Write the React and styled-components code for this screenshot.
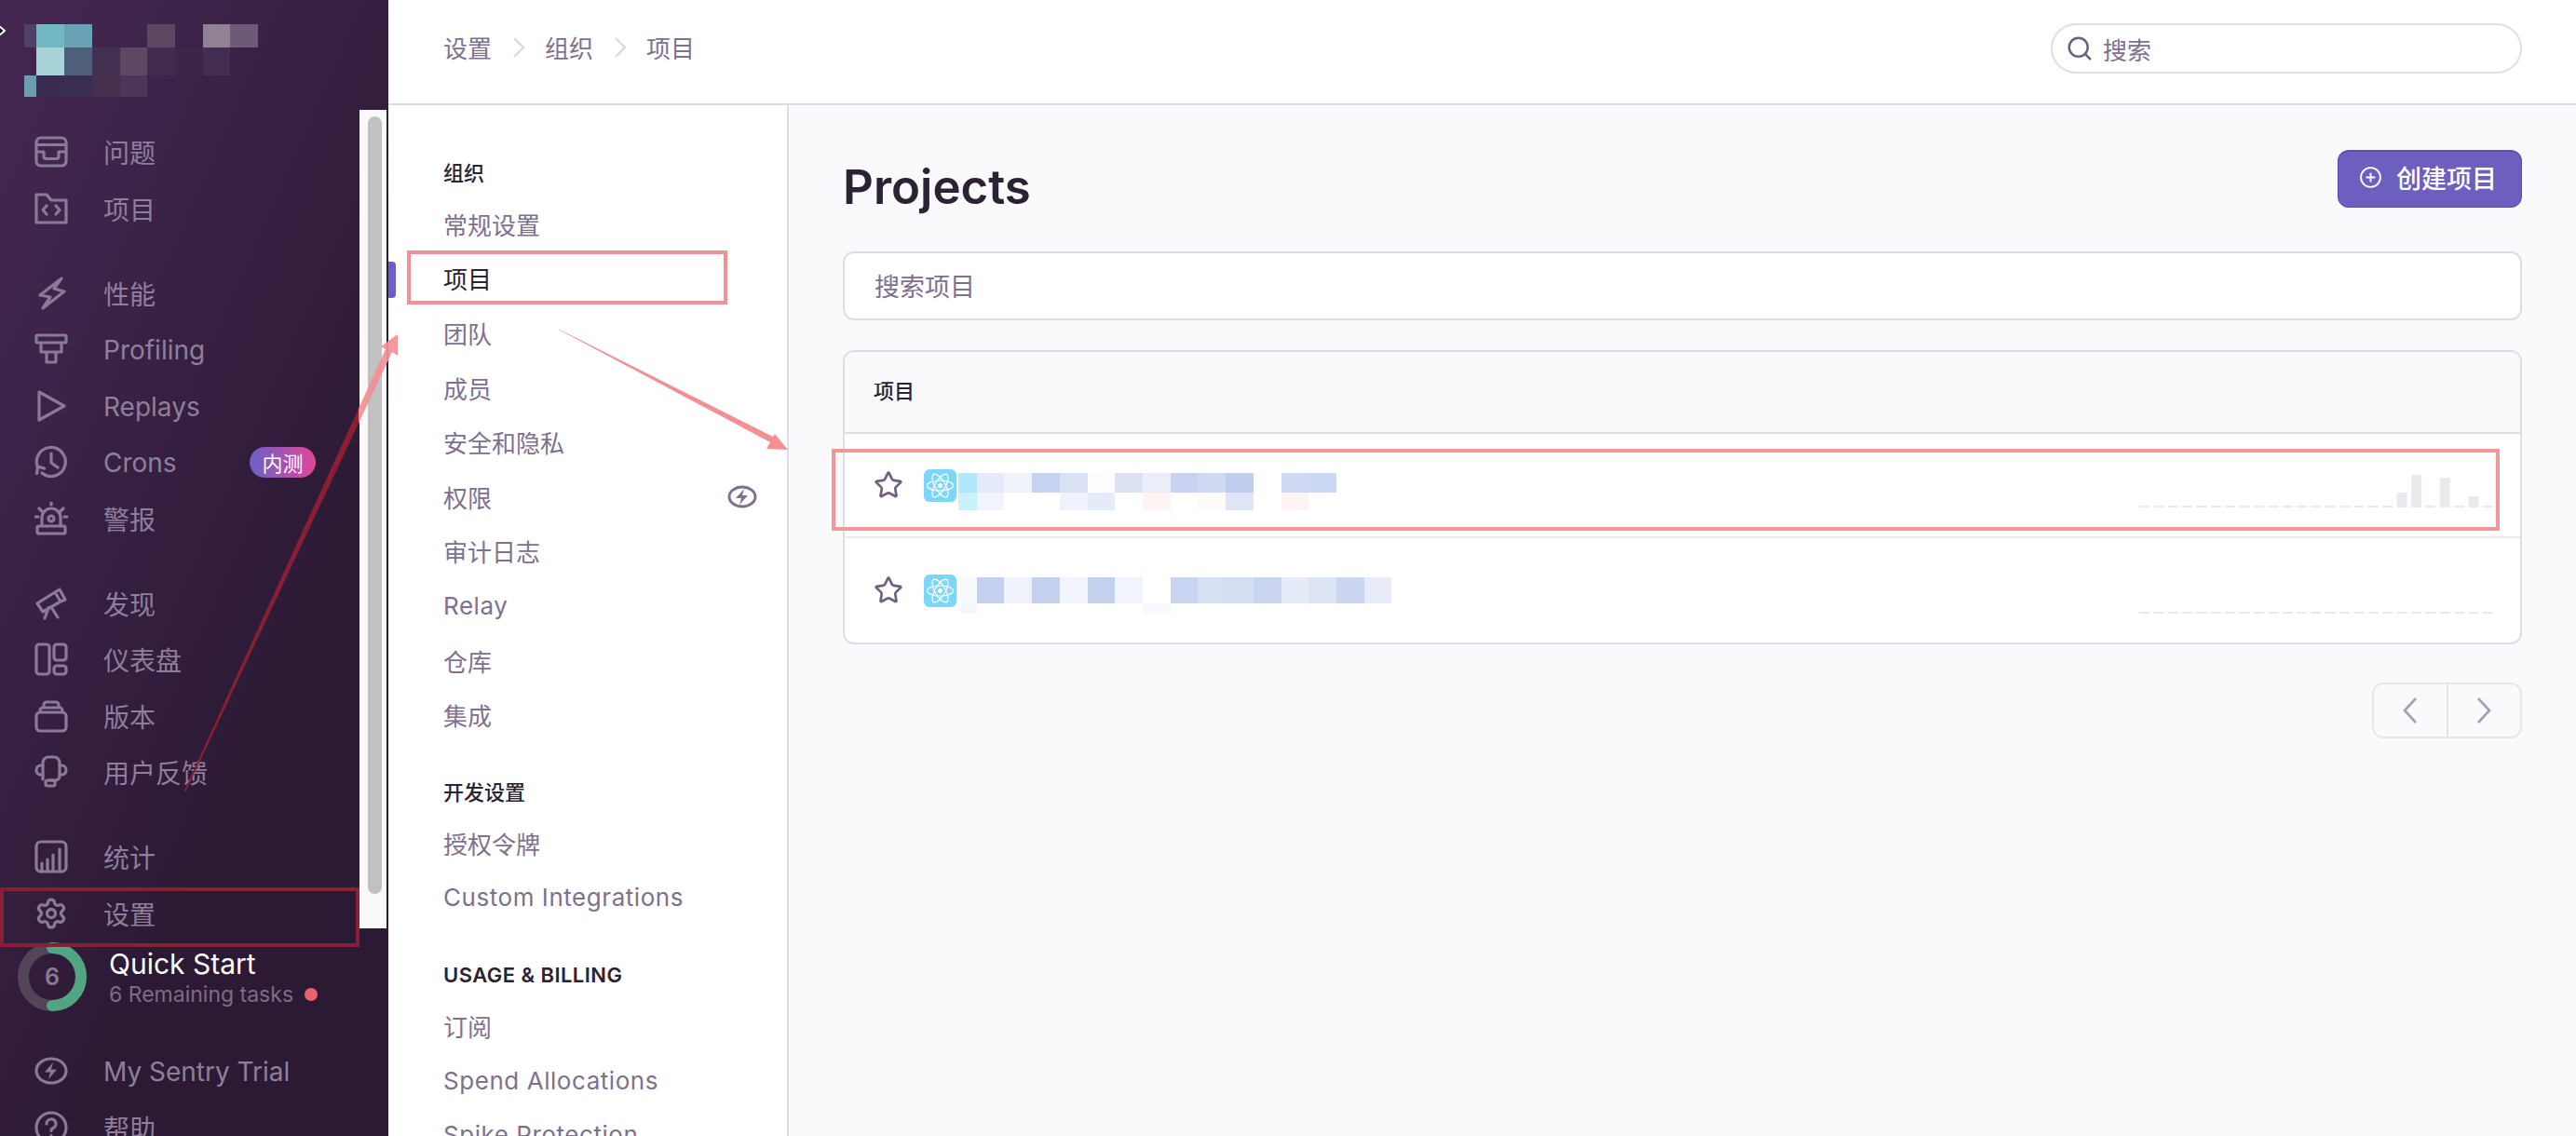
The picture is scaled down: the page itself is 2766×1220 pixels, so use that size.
import React from 'react';
import styled, { createGlobalStyle } from 'styled-components';
import { Search, Settings, Star, CirclePlus } from 'lucide-react';

const FONT = `Inter, "Noto Sans CJK SC", "Noto Sans", sans-serif`;

const Global = createGlobalStyle`
  html, body { margin: 0; padding: 0; height: 1220px; overflow: hidden; background: #fff; }
  * { box-sizing: border-box; }
  body { font-family: ${FONT}; }
`;

const Page = styled.div`
  position: relative;
  display: flex;
  width: 2766px;
  height: 1220px;
  overflow: hidden;
`;

/* ---------- primary sidebar ---------- */
const Sidebar = styled.aside`
  flex: 0 0 417px;
  height: 1220px;
  padding-top: 26px;
  overflow: hidden;
  background: linear-gradient(294deg, #2c1a35 35%, #432650 92%);
`;
const Logo = styled.svg`
  display: block;
  margin: 0 0 29px 26px;
`;
const SideGroup = styled.div`
  display: flex;
  flex-direction: column;
  margin-bottom: ${p => p.$gap ?? 31}px;
`;
const SideRow = styled.div`
  display: flex;
  align-items: center;
  gap: 38px;
  height: 60.4px;
  padding-left: 37px;
  font-size: 28px;
  color: #8e7f9c;
  white-space: nowrap;
`;
const SideLabel = styled.span`
  flex: ${p => (p.$grow ? 1 : '0 0 auto')};
  font-size: 28px;
  position: relative;
  top: ${p => (p.$latin ? 1 : 0)}px;
`;
const Beta = styled.span`
  display: flex;
  align-items: center;
  justify-content: center;
  width: 71px;
  height: 33px;
  margin-right: 78px;
  border-radius: 17px;
  font-size: 22px;
  color: #fff;
  background: linear-gradient(90deg, #6c5fc7, #e1469a);
`;
const Ico = styled.svg`
  flex: 0 0 36px;
  width: 36px;
  height: 36px;
  fill: none;
  stroke: #8a7a97;
  stroke-width: 3.2;
  stroke-linecap: round;
  stroke-linejoin: round;
`;
const QuickStart = styled.div`
  display: flex;
  align-items: center;
  gap: 24px;
  height: 74px;
  margin: 1px 0 34px 19px;
`;
const Ring = styled.div`
  position: relative;
  flex: 0 0 74px;
  height: 74px;
`;
const RingNum = styled.span`
  position: absolute;
  inset: 0;
  display: flex;
  align-items: center;
  justify-content: center;
  font-size: 25px;
  font-weight: 600;
  color: #8a7b94;
`;
const QuickText = styled.div`
  display: flex;
  flex-direction: column;
  gap: 2px;
  margin-top: 3px;
`;
const QuickTitle = styled.div`
  font-size: 30px;
  line-height: 33px;
  font-weight: 400;
  color: #fff;
`;
const QuickSub = styled.div`
  display: flex;
  align-items: center;
  gap: 12px;
  font-size: 23px;
  line-height: 28px;
  color: #7c6c88;
`;
const RedDot = styled.i`
  width: 14px;
  height: 14px;
  border-radius: 50%;
  background: #e8636b;
`;
const ScrollTrack = styled.div`
  position: absolute;
  left: 385px;
  top: 118px;
  width: 30px;
  height: 879px;
  padding: 7px 6px 37px 9px;
  background: #f9f9f9;
  border-left: 1px solid #222;
`;
const ScrollThumb = styled.div`
  width: 15px;
  height: 100%;
  border-radius: 8px;
  background: #c1c1c1;
`;
const Cursor = styled.svg`
  position: absolute;
  left: 0;
  top: 26px;
`;

/* ---------- right column ---------- */
const Column = styled.div`
  flex: 1;
  display: flex;
  flex-direction: column;
  min-width: 0;
`;
const Header = styled.header`
  flex: 0 0 113px;
  display: flex;
  align-items: center;
  justify-content: space-between;
  padding: 0 58px 7px 59px;
  background: #fff;
  border-bottom: 2px solid #e0dce5;
`;
const Crumbs = styled.nav`
  display: flex;
  align-items: center;
  gap: 21.5px;
  margin-top: -3px;
  font-size: 26px;
  color: #80708f;
`;
const CrumbSep = styled.svg`
  width: 14px;
  height: 24px;
  fill: none;
  stroke: #dcd8e2;
  stroke-width: 2.4;
`;
const HeaderSearch = styled.div`
  display: flex;
  align-items: center;
  gap: 10px;
  width: 506px;
  height: 54px;
  padding-left: 14px;
  border: 2px solid #e0dce5;
  border-radius: 27px;
  background: #fff;
  font-size: 26px;
  color: #80708f;
  svg { color: #6f5f7d; }
`;
const Body = styled.div`
  flex: 1;
  display: flex;
  min-height: 0;
`;

/* ---------- settings nav ---------- */
const SettingsNav = styled.nav`
  flex: 0 0 430px;
  padding: 59px 0 0 59px;
  overflow: hidden;
  background: #fff;
  border-right: 2px solid #e0dce5;
`;
const NavGroup = styled.div`
  margin-bottom: 40px;
`;
const NavHeading = styled.div`
  height: 28px;
  margin-bottom: 11px;
  font-size: 22px;
  line-height: 28px;
  font-weight: ${p => (p.$latin ? 600 : 500)};
  letter-spacing: ${p => (p.$latin ? 0.45 : 0)}px;
  color: #2b2233;
`;
const NavItem = styled.div`
  position: relative;
  display: flex;
  align-items: center;
  justify-content: space-between;
  height: 58.6px;
  padding-right: 32px;
  font-size: 26px;
  letter-spacing: ${p => (p.$latin ? 0.55 : 0)}px;
  color: ${p => (p.$active ? '#2b2233' : '#80708f')};
  white-space: nowrap;
`;
const ActiveBar = styled.i`
  position: absolute;
  left: -59px;
  top: 11px;
  width: 8px;
  height: 39px;
  border-radius: 0 4px 4px 0;
  background: #6c5fc7;
`;
const Bolt = styled.svg`
  width: 32px;
  height: 25px;
  fill: none;
  stroke: #80708f;
  stroke-width: 3;
`;

/* ---------- main ---------- */
const Main = styled.main`
  flex: 1;
  padding: 48px 58px 0;
  background: #faf9fb;
`;
const TitleRow = styled.div`
  display: flex;
  align-items: center;
  justify-content: space-between;
  height: 62px;
  margin-bottom: 47px;
`;
const Title = styled.h1`
  margin: 17px 0 0;
  font-size: 51px;
  font-weight: 600;
  color: #2b2233;
`;
const CreateButton = styled.button`
  display: flex;
  align-items: center;
  gap: 15px;
  width: 198px;
  height: 62px;
  padding: 0 0 4px 22px;
  border: 2px solid #5a4db5;
  border-width: 2px 1px 1px;
  border-radius: 12px;
  background: #6c5fc0;
  color: #fff;
  font: 500 27px ${FONT};
`;
const ProjectSearch = styled.div`
  display: flex;
  align-items: center;
  height: 74px;
  margin-bottom: 32px;
  padding: 0 0 1px 32px;
  border: 2px solid #e0dce5;
  border-radius: 12px;
  background: #fff;
  font-size: 27px;
  color: #80708f;
`;
const Table = styled.section`
  height: 316px;
  border: 2px solid #e0dce5;
  border-radius: 12px;
  overflow: hidden;
  background: #fff;
`;
const TableHead = styled.div`
  display: flex;
  align-items: center;
  height: 88px;
  padding: 0 0 6px 31px;
  border-bottom: 2px solid #e0dce5;
  background: #faf9fb;
  font-size: 22px;
  font-weight: 500;
  color: #2b2233;
`;
const ProjectRow = styled.div`
  position: relative;
  display: flex;
  align-items: center;
  height: 112px;
  padding-left: 31px;
  border-bottom: ${p => (p.$last ? 0 : 2)}px solid #ebe8ee;
`;
const StarWrap = styled.div`
  display: flex;
  width: 54px;
  color: #6f6080;
`;
const Platform = styled.svg`
  flex: 0 0 35px;
  height: 35px;
`;
const Mosaic = styled.svg`
  display: block;
  margin: ${p => p.$top}px 0 0 2px;
`;
const Spark = styled.svg`
  position: absolute;
  left: 1390px;
  bottom: 31px;
`;
const Pager = styled.div`
  display: flex;
  width: 161px;
  height: 60px;
  margin: 41px 0 0 auto;
  border: 2px solid #e9e6ec;
  border-radius: 12px;
`;
const PageBtn = styled.div`
  flex: 1;
  display: flex;
  align-items: center;
  justify-content: center;
  & + & { border-left: 2px solid #e4e1e8; }
`;
const PageChevron = styled.svg`
  width: 16px;
  height: 28px;
  fill: none;
  stroke: #a99db5;
  stroke-width: 2.6;
`;
const Annotations = styled.svg`
  position: absolute;
  left: 0;
  top: 0;
  pointer-events: none;
`;

/* ---------- icons ---------- */
const BOLT = 'M20 9 11 19.500h6L15 27l9-10.500h-6z';
const icons = {
  issues: <><rect x="2" y="3" width="32" height="30" rx="5" /><path d="M2 10.500h32M2 18h8v5a2.500 2.500 0 0 0 2.500 2.500h11a2.500 2.500 0 0 0 2.500-2.500v-5h8" /></>,
  projects: <><path d="M2 3h11l5 6h16v24H2z" /><path d="M13 15l-4 4.500 4 4.500M23 15l4 4.500-4 4.500" /></>,
  perf: <path d="M29 2 6 20l11 2-8 12 23-18-11-3z" />,
  profiling: <><rect x="2" y="3" width="32" height="8" rx="1" /><path d="M7 11v10h22V11M13 21v11h10V21" /></>,
  replays: <path d="M5 3l27 15L5 33z" />,
  crons: <><path d="M3.500 24A15.500 15.500 0 1 1 8 30" /><path d="M18 9v10l7 5M2.500 30.500l1-7.500 7 2" /></>,
  alerts: <><rect x="3" y="26" width="30" height="8" rx="1.500" /><path d="M8 26v-9a10 10 0 0 1 20 0v9" /><circle cx="18" cy="18" r="3" /><path d="M18 1v2M5 7l3 3M31 7l-3 3M1 16h3M32 16h3" /></>,
  discover: <><path d="M3 18 22 6l6 10-19 11zM22 6l5-3 6 11-5 2" /><path d="M15 23l-4 11M18 22l7 11" /></>,
  dashboards: <><rect x="2" y="2" width="14" height="32" rx="3" /><rect x="21" y="2" width="13" height="17" rx="3" /><rect x="21" y="25" width="13" height="9" rx="3" /></>,
  releases: <><rect x="2" y="14" width="32" height="20" rx="4" /><path d="M6 14v-2a3 3 0 0 1 3-3h18a3 3 0 0 1 3 3v2M10 8V6a3 3 0 0 1 3-3h10a3 3 0 0 1 3 3v2" /></>,
  feedback: <><path d="M9 26V8a6 6 0 0 1 6-6h6a6 6 0 0 1 6 6v14a5 5 0 0 1-5 5h-6" /><rect x="12" y="27" width="10" height="6" rx="2" /><path d="M9 11H7a5 5 0 0 0 0 10h2M27 11h2a5 5 0 0 1 0 10h-2" /></>,
  stats: <><rect x="2" y="2" width="32" height="32" rx="5" /><path d="M8 34V25M14 34V21M20 34V16M27 34V10" /></>,
  trial: <><ellipse cx="18" cy="18" rx="16" ry="13" /><path d={BOLT} fill="#8a7a97" stroke="none" /></>,
  help: <><circle cx="18" cy="18" r="16" /><path d="M13 14a5 5 0 1 1 7 4.500c-1.500.7-2 1.500-2 3M18 26.500v.5" /></>,
};
const Icon = ({ name }) => <Ico viewBox="0 0 36 36">{icons[name]}</Ico>;

/* ---------- data ---------- */
const sideGroups = [
  [['issues', '问题'], ['projects', '项目']],
  [['perf', '性能'], ['profiling', 'Profiling'], ['replays', 'Replays'], ['crons', 'Crons', true], ['alerts', '警报']],
  [['discover', '发现'], ['dashboards', '仪表盘'], ['releases', '版本'], ['feedback', '用户反馈']],
];

const logoCols = [0, 13, 43, 73, 103, 132, 162, 192, 221, 251];
const logoRows = [0, 25, 55, 78];
const logoCells = [
  ['#4d4165', '#72b8c3', '#68a2b4', null, null, '#5c4863', null, '#908294', '#6d5a78'],
  [null, '#a7d3d9', '#4f5f7a', '#432f50', '#5d4866', '#432b50', '#3c2647', '#432d50', null],
  ['#6a9db0', '#3a2c50', '#3a2e50', '#47304f', '#4b3659', null, null, null, null],
];

const nameCols1 = [0, 20, 49, 79, 109, 139, 168, 198, 228, 257, 287, 317, 347, 376, 406];
const nameTop1 = ['#b3e8fc', '#e5ebf8', '#f0f2fa', '#c5d2f0', '#dae1f4', '#fdfdfe', '#dce1f4', '#ebedf8', '#c9d3f1', '#cfd9f2', '#c1cdee', null, '#cfd9f3', '#ccd7f2'];
const nameBot1 = ['#c9f0fb', '#f1f5fd', null, null, '#eff2fb', '#e5ebf8', null, '#fef4f4', null, '#fffafa', '#e0e5f6', null, '#fef4f4', null];
const nameCols2 = [2, 20, 49, 79, 109, 139, 168, 198, 228, 257, 287, 317, 347, 376, 406, 436, 465];
const nameTop2 = ['#f7f9fd', '#c4d0ef', '#eff2fb', '#c3d1ef', '#f2f5fc', '#c3d1ef', '#f1f4fc', null, '#c9d4f0', '#d6e0f3', '#d3def3', '#c9d4f0', '#e6ebf8', '#dce4f5', '#cbd5f0', '#e8ecf8'];
const nameBot2 = ['#f5f8fe', null, null, null, null, null, null, '#f8f9fe', null, null, null, null, null, null, null, null];

const Cells = ({ cols, colors, y, h }) =>
  colors.map((c, i) =>
    c ? <rect key={i} x={cols[i]} y={y} width={cols[i + 1] - cols[i]} height={h} fill={c} /> : null
  );

const SparkBars = ({ bars }) => (
  <Spark width="386" height="40" viewBox="0 0 386 40">
    {Array.from({ length: 25 }, (_, i) => {
      const h = bars[i] ?? 2;
      return <rect key={i} x={i * 15.37} y={40 - h} width="11" height={h} fill="#ebe9ee" />;
    })}
  </Spark>
);

const Atom = () => (
  <Platform viewBox="0 0 35 35">
    <rect width="35" height="35" rx="6" fill="#7dd6f8" />
    <g fill="none" stroke="#fff" strokeWidth="1.200">
      <ellipse cx="17.500" cy="17.500" rx="14" ry="5.500" />
      <ellipse cx="17.500" cy="17.500" rx="14" ry="5.500" transform="rotate(60 17.500 17.500)" />
      <ellipse cx="17.500" cy="17.500" rx="14" ry="5.500" transform="rotate(120 17.500 17.500)" />
    </g>
    <circle cx="17.500" cy="17.500" r="2.500" fill="#fff" />
  </Platform>
);

const Chevron = ({ dir }) => (
  <PageChevron viewBox="0 0 16 28">
    <path d={dir === 'left' ? 'M14 1 2 14l12 13' : 'M2 1l12 13L2 27'} />
  </PageChevron>
);

const PINK = '#f29095';
const WINE = '#8a1f34';
const arrow1 = 'M198 849 L414 375 L409 372 L427 359 L427 382 L421 378 L199.500 850 Z';
const arrow2 = 'M600 354 L601 354 L830 469 L832 466 L846 483 L823 482 L827 475 Z';

export default function App() {
  return (
    <Page>
      <Global />
      <Sidebar>
        <Logo width="251" height="78" viewBox="0 0 251 78">
          {logoCells.map((row, r) => (
            <Cells key={r} cols={logoCols} colors={row} y={logoRows[r]} h={logoRows[r + 1] - logoRows[r]} />
          ))}
        </Logo>
        {sideGroups.map((group, g) => (
          <SideGroup key={g}>
            {group.map(([icon, label, beta]) => (
              <SideRow key={label}>
                <Icon name={icon} />
                <SideLabel $grow={beta} $latin={/^[A-Z]/.test(label)}>{label}</SideLabel>
                {beta && <Beta>内测</Beta>}
              </SideRow>
            ))}
          </SideGroup>
        ))}
        <SideGroup $gap={0}>
          <SideRow><Icon name="stats" /><SideLabel>统计</SideLabel></SideRow>
          <SideRow>
            <Settings size={36} strokeWidth={2.2} color="#8a7a97" style={{ flex: '0 0 36px' }} />
            <SideLabel>设置</SideLabel>
          </SideRow>
        </SideGroup>
        <QuickStart>
          <Ring>
            <svg width="74" height="74" viewBox="0 0 74 74" fill="none" strokeWidth="12">
              <circle cx="37" cy="37" r="31" stroke="#524459" />
              <path d="M37 6a31 31 0 0 1 0 62" stroke="#52a583" strokeLinecap="round" />
            </svg>
            <RingNum>6</RingNum>
          </Ring>
          <QuickText>
            <QuickTitle>Quick Start</QuickTitle>
            <QuickSub>6 Remaining tasks<RedDot /></QuickSub>
          </QuickText>
        </QuickStart>
        <SideGroup $gap={0}>
          <SideRow><Icon name="trial" /><SideLabel $latin>My Sentry Trial</SideLabel></SideRow>
          <SideRow><Icon name="help" /><SideLabel>帮助</SideLabel></SideRow>
        </SideGroup>
      </Sidebar>

      <ScrollTrack><ScrollThumb /></ScrollTrack>
      <Cursor width="6" height="14" viewBox="0 0 6 14">
        <path d="M-2 1 5 7l-7 6" fill="#111" stroke="#fff" strokeWidth="2" />
      </Cursor>

      <Column>
        <Header>
          <Crumbs>
            <span>设置</span>
            <CrumbSep viewBox="0 0 14 24"><path d="M2 2l10 10L2 22" /></CrumbSep>
            <span>组织</span>
            <CrumbSep viewBox="0 0 14 24"><path d="M2 2l10 10L2 22" /></CrumbSep>
            <span>项目</span>
          </Crumbs>
          <HeaderSearch><Search size={30} strokeWidth={2} />搜索</HeaderSearch>
        </Header>
        <Body>
          <SettingsNav>
            <NavGroup>
              <NavHeading>组织</NavHeading>
              <NavItem>常规设置</NavItem>
              <NavItem $active><ActiveBar />项目</NavItem>
              <NavItem>团队</NavItem>
              <NavItem>成员</NavItem>
              <NavItem>安全和隐私</NavItem>
              <NavItem>
                权限
                <Bolt viewBox="0 0 32 25">
                  <ellipse cx="16" cy="12.500" rx="14" ry="10.500" />
                  <path d="M18 4 9 14h6l-2 7 9-10h-6z" fill="#80708f" stroke="none" />
                </Bolt>
              </NavItem>
              <NavItem>审计日志</NavItem>
              <NavItem $latin>Relay</NavItem>
              <NavItem>仓库</NavItem>
              <NavItem>集成</NavItem>
            </NavGroup>
            <NavGroup>
              <NavHeading>开发设置</NavHeading>
              <NavItem>授权令牌</NavItem>
              <NavItem $latin>Custom Integrations</NavItem>
            </NavGroup>
            <NavGroup>
              <NavHeading $latin>USAGE &amp; BILLING</NavHeading>
              <NavItem>订阅</NavItem>
              <NavItem $latin>Spend Allocations</NavItem>
              <NavItem $latin>Spike Protection</NavItem>
            </NavGroup>
          </SettingsNav>
          <Main>
            <TitleRow>
              <Title>Projects</Title>
              <CreateButton><CirclePlus size={25} strokeWidth={1.8} />创建项目</CreateButton>
            </TitleRow>
            <ProjectSearch>搜索项目</ProjectSearch>
            <Table>
              <TableHead>项目</TableHead>
              <ProjectRow>
                <StarWrap><Star size={32} strokeWidth={2} /></StarWrap>
                <Atom />
                <Mosaic $top={14} width="406" height="40" viewBox="0 0 406 40">
                  <Cells cols={nameCols1} colors={nameTop1} y={0} h={21} />
                  <Cells cols={nameCols1} colors={nameBot1} y={21} h={19} />
                </Mosaic>
                <SparkBars bars={{ 18: 16, 19: 35, 21: 32, 23: 12 }} />
              </ProjectRow>
              <ProjectRow $last>
                <StarWrap><Star size={32} strokeWidth={2} /></StarWrap>
                <Atom />
                <Mosaic $top={11} width="465" height="39" viewBox="0 0 465 39">
                  <Cells cols={nameCols2} colors={nameTop2} y={0} h={28} />
                  <Cells cols={nameCols2} colors={nameBot2} y={28} h={11} />
                </Mosaic>
                <SparkBars bars={{}} />
              </ProjectRow>
            </Table>
            <Pager>
              <PageBtn><Chevron dir="left" /></PageBtn>
              <PageBtn><Chevron dir="right" /></PageBtn>
            </Pager>
          </Main>
        </Body>
      </Column>

      <Annotations width="2766" height="1220" viewBox="0 0 2766 1220">
        <defs>
          <clipPath id="onDark"><rect x="0" y="0" width="385" height="1220" /></clipPath>
          <clipPath id="onLight"><rect x="385" y="0" width="600" height="1220" /></clipPath>
        </defs>
        <rect x="2" y="955" width="382" height="60" fill="none" stroke={WINE} strokeWidth="4" />
        <path d={arrow1} fill={WINE} clipPath="url(#onDark)" />
        <path d={arrow1} fill={PINK} fillOpacity=".92" clipPath="url(#onLight)" />
        <rect x="439" y="271" width="340" height="54" fill="none" stroke={PINK} strokeWidth="4" />
        <path d={arrow2} fill={PINK} />
        <rect x="895" y="484" width="1787" height="84" fill="none" stroke={PINK} strokeOpacity=".95" strokeWidth="4" />
      </Annotations>
    </Page>
  );
}
